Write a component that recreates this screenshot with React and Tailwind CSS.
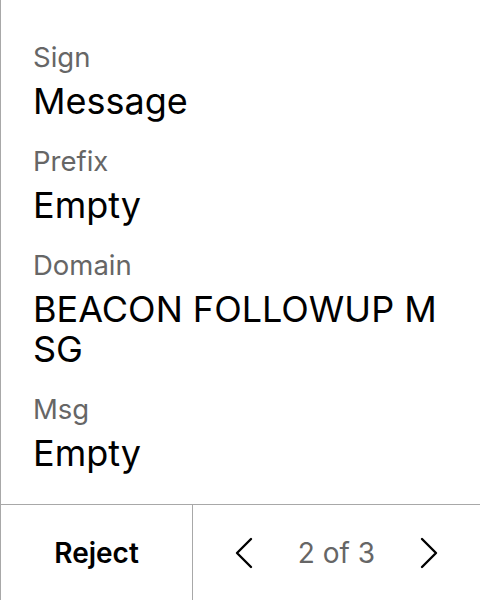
const fields = [
  { label: 'Sign', value: 'Message' },
  { label: 'Prefix', value: 'Empty' },
  { label: 'Domain', value: 'BEACON FOLLOWUP MSG' },
  { label: 'Msg', value: 'Empty' },
];

const Chevron = ({ dir }) => (
  <svg width="18" height="32" viewBox="0 0 18 32" fill="none">
    <polyline
      points={dir === 'left' ? '16,2 2,16 16,30' : '2,2 16,16 2,30'}
      stroke="#000"
      strokeWidth="2.4"
      strokeLinecap="round"
      strokeLinejoin="round"
    />
  </svg>
);

export default function App() {
  return (
    <div
      className="h-[600px] w-[480px] flex flex-col bg-white border-l border-[#a8a8a8]"
      style={{ fontFamily: 'Inter, "Noto Sans", sans-serif' }}
    >
      <div className="flex-1 pt-[41px] pl-[32px] pr-[32px] flex flex-col gap-[24px]">
        {fields.map((f) => (
          <div key={f.label} className="flex flex-col gap-[8px]">
            <span className="text-[27.5px] leading-[32px] text-[#666666]">{f.label}</span>
            <span className="text-[36px] leading-[40px] text-black break-all">{f.value}</span>
          </div>
        ))}
      </div>
      <div className="h-[96px] flex border-t border-[#a8a8a8]">
        <button className="w-[192px] flex items-center justify-center border-r border-[#a8a8a8] text-[28px] font-semibold text-black">
          Reject
        </button>
        <div className="flex-1 flex items-center justify-between px-[42px]">
          <Chevron dir="left" />
          <span className="text-[28px] text-[#666666]">2 of 3</span>
          <Chevron dir="right" />
        </div>
      </div>
    </div>
  );
}
